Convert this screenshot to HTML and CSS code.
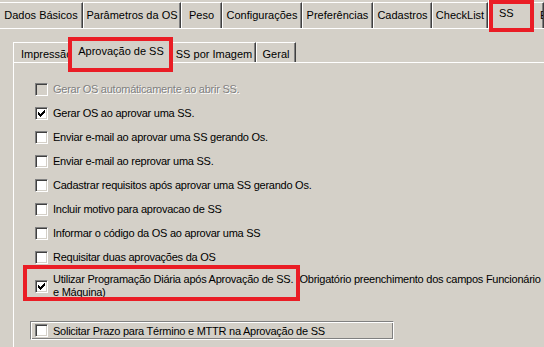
FILE: index.html
```html
<!DOCTYPE html>
<html>
	<head>
		<meta charset="utf-8">
		<title>Configurações - SS</title>
		<link rel="stylesheet" href="styles.css">
	</head>
	<body>
		<div class="tabs-top">
			<div class="tab">Dados Básicos</div>
			<div class="tab">Parâmetros da OS</div>
			<div class="tab">Peso</div>
			<div class="tab">Configurações</div>
			<div class="tab">Preferências</div>
			<div class="tab">Cadastros</div>
			<div class="tab">CheckList</div>
			<div class="tab active marked">SS</div>
			<div class="tab">Estoque</div>
		</div>

		<div class="inner">
			<div class="tabs-inner">
				<div class="itab">Impressão</div>
				<div class="itab active marked">Aprovação de SS</div>
				<div class="itab">SS por Imagem</div>
				<div class="itab">Geral</div>
			</div>
			<div class="page">
				<div class="row disabled"><span class="cb"></span><span class="lbl">Gerar OS automáticamente ao abrir SS.</span></div>
				<div class="row"><span class="cb"><svg width="7" height="7" viewBox="0 0 7 7" shape-rendering="crispEdges"><path d="M6 0h1v1h-1z M5 1h2v1h-2z M0 2h1v1h-1z M4 2h3v1h-3z M0 3h2v1h-2z M3 3h3v1h-3z M0 4h5v1h-5z M1 5h3v1h-3z M2 6h1v1h-1z"/></svg></span><span class="lbl">Gerar OS ao aprovar uma SS.</span></div>
				<div class="row"><span class="cb"></span><span class="lbl">Enviar e-mail ao aprovar uma SS gerando Os.</span></div>
				<div class="row"><span class="cb"></span><span class="lbl">Enviar e-mail ao reprovar uma SS.</span></div>
				<div class="row"><span class="cb"></span><span class="lbl">Cadastrar requisitos após aprovar uma SS gerando Os.</span></div>
				<div class="row"><span class="cb"></span><span class="lbl">Incluir motivo para aprovacao de SS</span></div>
				<div class="row"><span class="cb"></span><span class="lbl">Informar o código da OS ao aprovar uma SS</span></div>
				<div class="row"><span class="cb"></span><span class="lbl">Requisitar duas aprovações da OS</span></div>
				<div class="row wide">
					<span class="cb"><svg width="7" height="7" viewBox="0 0 7 7" shape-rendering="crispEdges"><path d="M6 0h1v1h-1z M5 1h2v1h-2z M0 2h1v1h-1z M4 2h3v1h-3z M0 3h2v1h-2z M3 3h3v1h-3z M0 4h5v1h-5z M1 5h3v1h-3z M2 6h1v1h-1z"/></svg></span>
					<span class="lbl">Utilizar Programação Diária após Aprovação de SS. (Obrigatório preenchimento dos campos Funcionário<br>e Máquina)</span>
					<span class="mark"></span>
				</div>
				<div class="group">
					<div class="row"><span class="cb"></span><span class="lbl">Solicitar Prazo para Término e MTTR na Aprovação de SS</span></div>
				</div>
			</div>
		</div>
	</body>
</html>
```

FILE: styles.css
```css
html,
body {
	margin: 0;
	width: 544px;
	height: 347px;
	overflow: hidden;
	background-color: #d4d0c8;
	font-family: "Liberation Sans", Arial, sans-serif;
	font-size: 11px;
	color: #000000;
}

/* top tab strip */
.tabs-top {
	display: flex;
	height: 28px;
	border-bottom: 1px solid #ffffff;
	white-space: nowrap;
}

.tab {
	position: relative;
	box-sizing: border-box;
	flex-shrink: 0;
	height: 26px;
	margin-top: 2px;
	line-height: 24px;
	text-align: center;
	border-top: 1px solid #ffffff;
	border-left: 1px solid #ffffff;
	border-right: 1px solid #404040;
	box-shadow: inset -1px 0 #808080;
}

.tab:nth-child(1) { width: 83px; border-left: none; }
.tab:nth-child(2) { width: 98px; }
.tab:nth-child(3) { width: 41px; }
.tab:nth-child(4) { width: 80px; }
.tab:nth-child(5) { width: 71px; }
.tab:nth-child(6) { width: 59px; }
.tab:nth-child(7) { width: 56px; }
.tab:nth-child(8) { width: 45px; }
.tab:nth-child(9) { width: 11px; overflow: hidden; text-align: left; padding-left: 6px; }

.tab.active {
	height: 29px;
	margin-top: 0;
	margin-bottom: -1px;
	text-align: left;
	padding-left: 10px;
	background-color: #d4d0c8;
	z-index: 1;
}

.marked::after {
	content: "";
	position: absolute;
	left: 0;
	top: -1px;
	right: -2px;
	bottom: -3px;
	border: 4px solid #ea1d25;
}

/* inner tab control */
.inner {
	margin: 11px 0 0 13px;
}

.tabs-inner {
	display: flex;
	height: 20px;
	padding-top: 2px;
	border-bottom: 1px solid #ffffff;
	white-space: nowrap;
}

.itab {
	position: relative;
	box-sizing: border-box;
	flex-shrink: 0;
	height: 20px;
	padding-top: 2px;
	line-height: 18px;
	text-align: center;
	border-top: 1px solid #ffffff;
	border-left: 1px solid #ffffff;
	border-right: 1px solid #404040;
	box-shadow: inset -1px 0 #808080;
}

.itab:nth-child(1) { width: 57px; text-align: left; padding-left: 7px; }
.itab:nth-child(2) { width: 102px; }
.itab:nth-child(3) { width: 84px; }
.itab:nth-child(4) { width: 40px; }

.itab.active {
	height: 23px;
	margin-top: -2px;
	margin-bottom: -1px;
	padding-top: 0;
	line-height: 21px;
	background-color: #d4d0c8;
	z-index: 1;
}

.itab.marked::after {
	left: -3px;
	top: -4px;
	right: -2px;
	bottom: -9px;
}

.page {
	border-left: 1px solid #ffffff;
	padding: 14px 0 0 21px;
	height: 270px;
	overflow: hidden;
}

.row {
	display: flex;
	align-items: center;
	height: 24px;
	white-space: nowrap;
}

.cb {
	box-sizing: border-box;
	display: flex;
	align-items: center;
	justify-content: center;
	flex-shrink: 0;
	width: 13px;
	height: 13px;
	background-color: #ffffff;
	border: 1px solid;
	border-color: #808080 #ffffff #ffffff #808080;
	box-shadow: inset 1px 1px #404040, inset -1px -1px #d4d0c8;
}

.cb svg {
	fill: #000000;
}

.lbl {
	margin-left: 5px;
	letter-spacing: -0.25px;
}

.disabled .cb {
	background-color: #d4d0c8;
}

.disabled .lbl {
	color: #808080;
	text-shadow: 1px 1px #ffffff;
}

.row.wide {
	position: relative;
	height: 28px;
	margin-top: 3px;
	line-height: 13px;
}

.mark {
	position: absolute;
	left: -12px;
	top: -7px;
	box-sizing: border-box;
	width: 277px;
	height: 36px;
	border: 4px solid #ea1d25;
}

.group {
	box-sizing: border-box;
	width: 364px;
	height: 19px;
	margin: 21px 0 0 -5px;
	padding-left: 4px;
	border: 1px solid;
	border-color: #808080 #ffffff #ffffff #808080;
	box-shadow: inset 1px 1px #ffffff, inset -1px -1px #808080;
}

.group .row {
	height: 17px;
}
```
